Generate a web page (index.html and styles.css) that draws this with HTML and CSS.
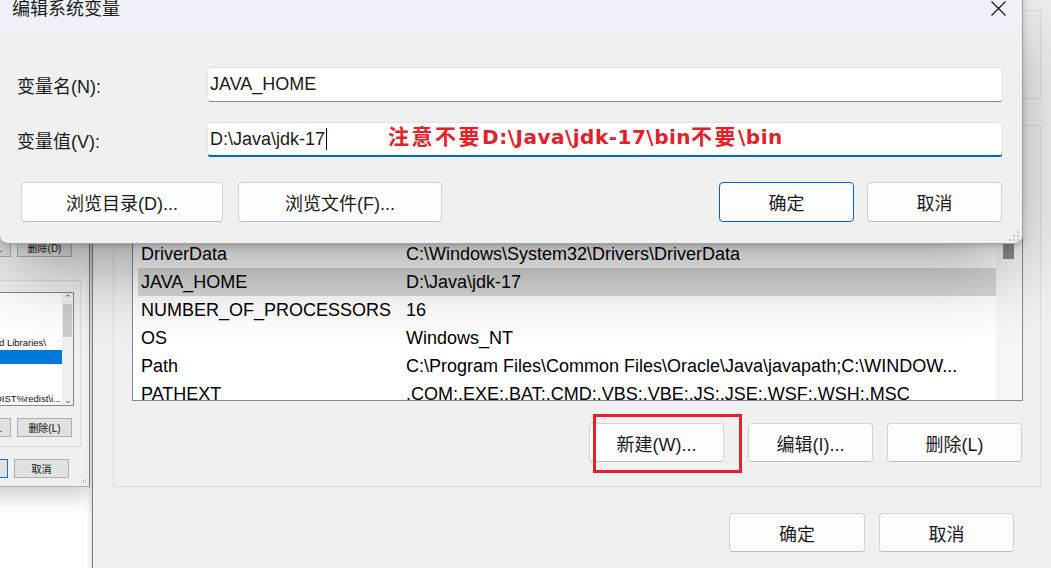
FILE: index.html
```html
<!DOCTYPE html>
<html lang="zh-CN">
<head>
<meta charset="utf-8">
<title>编辑系统变量</title>
<link rel="stylesheet" href="styles.css">
</head>
<body>
<div class="desktop">

  <!-- older environment window, mostly off-screen at the left -->
  <div class="win old">
    <div class="old-btns">
      <span class="obtn">编辑(I)...</span>
      <span class="obtn">删除(D)</span>
    </div>
    <div class="old-group">
      <div class="old-list">
        <div class="old-list-body">
          <div class="orow"></div>
          <div class="orow"></div>
          <div class="orow"></div>
          <div class="orow r r16"><span>C:\Program Files (x86)\Common Files\Intel\Shared Libraries\</span></div>
          <div class="orow sel"></div>
          <div class="orow"></div>
          <div class="orow"></div>
          <div class="orow r r1"><span>%VCToolsRedistDir%\..\..\VC_REDIST%redist\i...</span></div>
        </div>
        <div class="old-scroll">
          <span class="oarrow">&#8963;</span>
          <span class="othumb"></span>
          <span class="ospacer"></span>
          <span class="oarrow">&#8964;</span>
        </div>
      </div>
      <div class="old-btns old-btns-in">
        <span class="obtn">编辑(I)...</span>
        <span class="obtn">删除(L)</span>
      </div>
    </div>
    <div class="old-btns old-foot">
      <span class="obtn primary">确定</span>
      <span class="obtn">取消</span>
    </div>
    <svg class="ogrip" width="6" height="6" viewBox="0 0 6 6"><rect x="4" y="0" width="1" height="1"/><rect x="2" y="2" width="1" height="1"/><rect x="4" y="2" width="1" height="1"/><rect x="0" y="4" width="1" height="1"/><rect x="2" y="4" width="1" height="1"/><rect x="4" y="4" width="1" height="1"/></svg>
  </div>

  <!-- environment variables window -->
  <div class="win env">
    <div class="group group1"></div>
    <div class="group group2">
      <div class="list">
        <div class="list-body">
          <div class="row"><span class="c1">ComSpec</span><span class="c2">C:\WINDOWS\system32\cmd.exe</span></div>
          <div class="row"><span class="c1">DriverData</span><span class="c2">C:\Windows\System32\Drivers\DriverData</span></div>
          <div class="row sel"><span class="c1">JAVA_HOME</span><span class="c2">D:\Java\jdk-17</span></div>
          <div class="row"><span class="c1">NUMBER_OF_PROCESSORS</span><span class="c2">16</span></div>
          <div class="row"><span class="c1">OS</span><span class="c2">Windows_NT</span></div>
          <div class="row"><span class="c1">Path</span><span class="c2">C:\Program Files\Common Files\Oracle\Java\javapath;C:\WINDOW...</span></div>
          <div class="row"><span class="c1">PATHEXT</span><span class="c2">.COM;.EXE;.BAT;.CMD;.VBS;.VBE;.JS;.JSE;.WSF;.WSH;.MSC</span></div>
        </div>
        <div class="vscroll"><span class="thumb"></span></div>
      </div>
      <div class="actions">
        <span class="wbtn w135 new">新建(W)...<span class="hl"></span></span>
        <span class="wbtn w125 edit">编辑(I)...</span>
        <span class="wbtn w135">删除(L)</span>
      </div>
    </div>
    <div class="foot">
      <span class="wbtn w136">确定</span>
      <span class="wbtn w135">取消</span>
    </div>
  </div>

  <!-- edit dialog -->
  <div class="dialog">
    <div class="titlebar">
      <span class="title">编辑系统变量</span>
      <svg class="close" width="15" height="15" viewBox="0 0 15 15"><path d="M0.5 0.5L14.5 14.5M14.5 0.5L0.5 14.5"/></svg>
    </div>
    <div class="dlg-body">
      <div class="field">
        <span class="flabel">变量名(N):</span>
        <div class="tbox"><span class="val">JAVA_HOME</span></div>
      </div>
      <div class="field">
        <span class="flabel">变量值(V):</span>
        <div class="tbox focus"><span class="val">D:\Java\jdk-17</span><span class="caret"></span><span class="note"><span class="cj">注意不要</span>D:\Java\jdk-17\bin<span class="cj">不要</span>\bin</span></div>
      </div>
      <div class="dlg-btns">
        <div class="bgroup left">
          <span class="dbtn w202">浏览目录(D)...</span>
          <span class="dbtn w204">浏览文件(F)...</span>
        </div>
        <div class="bgroup right">
          <span class="dbtn w135 default">确定</span>
          <span class="dbtn w135">取消</span>
        </div>
      </div>
    </div>
    <svg class="grip" width="10" height="10" viewBox="0 0 10 10"><rect x="8" y="0" width="2" height="2"/><rect x="4" y="4" width="2" height="2"/><rect x="8" y="4" width="2" height="2"/><rect x="0" y="8" width="2" height="2"/><rect x="4" y="8" width="2" height="2"/><rect x="8" y="8" width="2" height="2"/></svg>
  </div>

</div>
</body>
</html>
```

FILE: styles.css
```css
* { box-sizing: border-box; margin: 0; padding: 0; }
html, body { width: 1051px; height: 568px; overflow: hidden; }
body {
  font-family: "Liberation Sans", "Noto Sans CJK SC", sans-serif;
  color: #000;
  background: #fff;
}
.desktop { position: relative; width: 1051px; height: 568px; overflow: hidden; background: #fff; }
.win { position: absolute; background: #f0f0f0; }

/* ---------- old window (left) ---------- */
.old {
  left: -410px; top: 150px; width: 500px; height: 337px;
  border-right: 1px solid #8c8c8c;
  border-bottom: 1px solid #b0b0b0;
  box-shadow: 0 8px 22px rgba(0,0,0,.22);
  z-index: 1;
  padding: 88px 17px 0 0;
  display: flex; flex-direction: column; align-items: flex-end;
  font-size: 11px;
}
.old-btns { display: flex; gap: 6px; }
.obtn {
  width: 55px; height: 19px;
  background: #e1e1e1; border: 1px solid #adadad;
  display: flex; align-items: center; justify-content: center;
  font-size: 10px; color: #111; white-space: nowrap;
}
.obtn.primary { border-color: #0078d7; }
.old-group {
  margin-top: 23px; margin-right: -9px;
  width: 480px; height: 167px;
  border: 1px solid #dcdcdc;
  padding: 11px 6px 0 0;
  display: flex; flex-direction: column; align-items: flex-end;
}
.old-list { width: 460px; height: 114px; border: 1px solid #828790; background: #fff; display: flex; }
.old-list-body { flex: 1; padding-top: 1px; overflow: hidden; }
.orow { height: 14px; line-height: 14px; white-space: nowrap; font-size: 9.5px; color: #111; }
.orow.r { display: flex; justify-content: flex-end; }
.orow.r span { flex-shrink: 0; }
.orow.r16 { padding-right: 16px; }
.orow.r1 { padding-right: 1px; }
.orow.sel { background: #0078d7; }
.old-scroll { width: 11px; background: #f0f0f0; display: flex; flex-direction: column; align-items: center; }
.oarrow { height: 10px; line-height: 10px; font-size: 9px; color: #606060; }
.othumb { width: 9px; height: 33px; background: #cdcdcd; margin-top: 1px; }
.ospacer { flex: 1; }
.old-btns-in { margin-top: 12px; margin-right: 2px; }
.old-foot { margin-top: 12px; margin-right: 3px; }
.ogrip { position: absolute; right: 2px; bottom: 2px; fill: #b5b5b5; }

/* ---------- environment window ---------- */
.env {
  left: 92px; top: -150px; width: 970px; height: 760px;
  border-left: 1px solid #7c7c7c;
  box-shadow: -2px 0 5px rgba(0,0,0,.12);
  z-index: 2;
  padding: 0 21px 0 20px;
  display: flex; flex-direction: column;
}
.group { border: 1px solid #dcdcdc; }
.group1 { margin-top: 160px; height: 89px; }
.group2 {
  margin-top: 26px; height: 362px;
  padding: 85px 17px 24px 18px;
  display: flex; flex-direction: column;
}
.list {
  height: 190px; border: 1px solid #828790; background: #fff;
  display: flex; overflow: hidden;
}
.list-body { flex: 1; min-width: 0; padding-left: 5px; overflow: hidden; }
.row {
  display: flex; height: 28px; line-height: 28px;
  padding-left: 3px; white-space: nowrap; font-size: 18px; color: #000;
}
.row.sel { background: #d9d9d9; }
.c1 { width: 265px; flex-shrink: 0; }
.c2 { flex: 1; min-width: 0; overflow: hidden; }
.vscroll { width: 26px; background: #f6f6f6; display: flex; flex-direction: column; }
.thumb { margin: 13px 0 0 7px; width: 11px; height: 34px; background: #8a8a8a; }

.wbtn {
  height: 39px;
  background: #fdfdfd;
  border: 1px solid #d3d3d3; border-bottom-color: #bdbdbd;
  border-radius: 4px;
  display: flex; align-items: center; justify-content: center;
  font-size: 18px; color: #1b1b1b; white-space: nowrap;
}
.w125 { width: 125px; }
.w135 { width: 135px; }
.w136 { width: 136px; }
.w202 { width: 202px; }
.w204 { width: 204px; }

.actions { margin-top: 22px; margin-right: 1px; display: flex; justify-content: flex-end; }
.actions .new { position: relative; margin-right: 24px; }
.actions .edit { margin-right: 14px; }
.hl {
  position: absolute; left: 3px; top: -10px;
  width: 149px; height: 59px;
  border: 3px solid #e4202a;
}
.foot { margin-top: 26px; margin-right: 27px; display: flex; justify-content: flex-end; gap: 14px; }

/* ---------- edit dialog ---------- */
.dialog {
  position: absolute; left: 0; top: -12px;
  width: 1023px; height: 256px;
  background: #f0f0f0;
  border-right: 1px solid #a2a2a2;
  border-bottom: 1px solid #a2a2a2;
  border-radius: 0 0 8px 8px;
  overflow: hidden;
  z-index: 3;
  box-shadow: 0 2px 6px rgba(0,0,0,.18), 0 30px 70px -8px rgba(0,0,0,.38);
}
.titlebar {
  height: 43px; background: #eef2f8;
  display: flex; align-items: flex-start; justify-content: space-between;
  padding: 10px 16px 0 12px;
}
.title { font-size: 18px; line-height: 18px; color: #1a1a1a; font-family: "Noto Sans CJK SC", sans-serif; }
.close { margin-top: 3px; fill: none; stroke: #1a1a1a; stroke-width: 1.3; }

.dlg-body { padding: 36px 19px 0 17px; display: flex; flex-direction: column; }
.field { display: flex; align-items: center; margin-bottom: 20px; }
.flabel { width: 190px; flex-shrink: 0; font-size: 18px; color: #1a1a1a; }
.tbox {
  flex: 1; height: 35px;
  background: #fff;
  border: 1px solid #e3e3e3; border-bottom: 1px solid #8a8a8a;
  border-radius: 4px;
  padding-left: 2px;
  display: flex; align-items: center;
  font-size: 18px; color: #1a1a1a; white-space: nowrap;
}
.tbox.focus { border-bottom: 2px solid #0067c0; }
.caret { width: 1px; height: 22px; background: #000; margin-left: 1px; }
.note {
  margin-left: 61px; margin-bottom: 8px;
  color: #e4202a; font-weight: bold; font-size: 20px;
  font-family: "DejaVu Sans", "Noto Sans CJK SC", sans-serif;
  letter-spacing: 0.5px;
}
.note .cj { font-family: "Noto Sans CJK SC", sans-serif; font-size: 21px; letter-spacing: 2.5px; }

.dlg-btns { margin-top: 5px; display: flex; justify-content: space-between; }
.bgroup { display: flex; }
.bgroup.left { margin-left: 4px; gap: 15px; }
.bgroup.right { margin-right: 1px; gap: 13px; }
.dbtn {
  height: 40px;
  background: #fdfdfd;
  border: 1px solid #d3d3d3; border-bottom-color: #bdbdbd;
  border-radius: 4px;
  display: flex; align-items: center; justify-content: center;
  font-size: 18px; color: #1b1b1b; white-space: nowrap;
}
.dbtn.default { border-color: #0067c0; }
.grip { position: absolute; right: 3px; bottom: 2px; fill: #c4c4c4; }
```
